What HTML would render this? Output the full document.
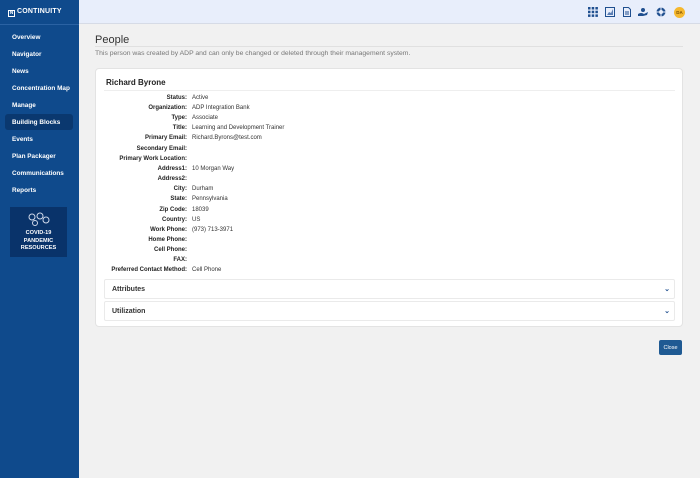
<!DOCTYPE html>
<html><head><style>
*{margin:0;padding:0;box-sizing:border-box}
body{width:700px;height:478px;overflow:hidden;background:#f1f1f1;font-family:"Liberation Sans",sans-serif;position:relative}
#sb{position:absolute;left:0;top:0;width:79px;height:478px;background:#0f4a8c}
#logo{position:absolute;left:8px;top:8px;color:#fff;font-size:7px;font-weight:bold;letter-spacing:.2px}
#logo span{display:inline-block;width:7px;height:7px;border:1px solid #fff;margin-right:2px;vertical-align:-1px;font-size:5px;line-height:5px;text-align:center}
.hr{position:absolute;left:0;top:24px;width:79px;height:1px;background:#2a62a3}
.nav{position:absolute;left:12px;color:#fff;font-size:6.4px;font-weight:bold}
#bb{position:absolute;left:5px;top:114px;width:68px;height:16px;background:#0a386f;border-radius:3px}
#covid{position:absolute;left:10px;top:207px;width:57px;height:50px;background:#09336a;color:#fff;font-size:5.6px;font-weight:bold;text-align:center;line-height:7.5px;padding-top:23px}
#hd{position:absolute;left:79px;top:0;width:621px;height:24px;background:#e8eefb;border-bottom:1px solid #d6dbe6}
h1{position:absolute;left:95px;top:34px;font-size:11px;font-weight:normal;color:#333}
.sep{position:absolute;left:95px;top:46px;width:588px;height:1px;background:#e0e0e0}
.note{position:absolute;left:95px;top:50px;font-size:6.8px;color:#777}
#card{position:absolute;left:95px;top:68px;width:588px;height:259px;background:#fff;border:1px solid #e3e3e3;border-radius:4px}
#name{position:absolute;left:106px;top:78px;font-size:8px;font-weight:bold;color:#222}
.sep2{position:absolute;left:104px;top:90px;width:571px;height:1px;background:#eee}
.r{position:absolute;font-size:6px;color:#333;white-space:nowrap}
.l{right:513px;font-weight:bold;color:#222}
.v{left:192px}
.acc{position:absolute;left:104px;width:571px;height:20px;background:#fff;border:1px solid #eaeaea;border-radius:2px;font-size:7px;font-weight:bold;color:#333;padding:6px 7px}
.acc i{position:absolute;right:4px;top:5px;font-style:normal;color:#1f4f8f;font-size:7px}
#close{position:absolute;left:659px;top:340px;width:23px;height:15px;background:#1f5a93;border-radius:2px;color:#fff;font-size:5.5px;display:flex;align-items:center;justify-content:center}
.ic{position:absolute;top:7px;width:10px;height:10px}
</style></head><body>
<div id="sb">
<div id="logo"><span>N</span>CONTINUITY</div>
<div class="hr"></div>
<div id="bb"></div>
<div class="nav" style="top:34px">Overview</div>
<div class="nav" style="top:51px">Navigator</div>
<div class="nav" style="top:68px">News</div>
<div class="nav" style="top:85px">Concentration Map</div>
<div class="nav" style="top:102px">Manage</div>
<div class="nav" style="top:119px">Building Blocks</div>
<div class="nav" style="top:136px">Events</div>
<div class="nav" style="top:153px">Plan Packager</div>
<div class="nav" style="top:170px">Communications</div>
<div class="nav" style="top:187px">Reports</div>
<div id="covid"><svg style="position:absolute;left:16px;top:4px" width="26" height="16" viewBox="0 0 26 16"><g fill="none" stroke="#cfd8ea" stroke-width="1"><circle cx="6" cy="6" r="3"/><circle cx="14" cy="5" r="3"/><circle cx="20" cy="9" r="3"/><circle cx="9" cy="12" r="2.5"/></g></svg>COVID-19<br>PANDEMIC<br>RESOURCES</div>
</div>
<div id="hd"></div>
<svg class="ic" style="left:588px" viewBox="0 0 10 10" fill="#1f4f8f"><rect x="0" y="0" width="2.5" height="2.5"/><rect x="3.7" y="0" width="2.5" height="2.5"/><rect x="7.4" y="0" width="2.5" height="2.5"/><rect x="0" y="3.7" width="2.5" height="2.5"/><rect x="3.7" y="3.7" width="2.5" height="2.5"/><rect x="7.4" y="3.7" width="2.5" height="2.5"/><rect x="0" y="7.4" width="2.5" height="2.5"/><rect x="3.7" y="7.4" width="2.5" height="2.5"/><rect x="7.4" y="7.4" width="2.5" height="2.5"/></svg>
<svg class="ic" style="left:605px" viewBox="0 0 10 10"><rect x=".5" y=".5" width="9" height="9" fill="none" stroke="#1f4f8f"/><path d="M2 8L4 5L6 6L8 2V8Z" fill="#5b7fb5"/></svg>
<svg class="ic" style="left:622px" viewBox="0 0 10 10"><path d="M1.5 .5H6.5L8.5 2.5V9.5H1.5Z" fill="none" stroke="#1f4f8f"/><path d="M3 5H7M3 7H7" stroke="#1f4f8f"/></svg>
<svg class="ic" style="left:638px" viewBox="0 0 10 10" fill="#1f4f8f"><circle cx="5" cy="3" r="2"/><path d="M0 7Q3 5 6 7L10 5L9 8L5 9L0 9Z"/></svg>
<svg class="ic" style="left:656px" viewBox="0 0 10 10"><circle cx="5" cy="5" r="4.5" fill="#1f4f8f"/><circle cx="5" cy="5" r="2" fill="#e8eefb"/><path d="M5 .5V9.5M.5 5H9.5" stroke="#e8eefb" stroke-width="1"/></svg>
<div style="position:absolute;left:674px;top:7px;width:11px;height:11px;border-radius:50%;background:#f5b82e;font-size:4.5px;font-weight:bold;color:#7a4d00;text-align:center;line-height:11px">DA</div>
<h1>People</h1>
<div class="sep"></div>
<div class="note">This person was created by ADP and can only be changed or deleted through their management system.</div>
<div id="card"></div>
<div id="name">Richard Byrone</div>
<div class="sep2"></div>
<div class="r l" style="top:95px">Status:</div><div class="r v" style="top:95px">Active</div>
<div class="r l" style="top:105px">Organization:</div><div class="r v" style="top:105px">ADP Integration Bank</div>
<div class="r l" style="top:115px">Type:</div><div class="r v" style="top:115px">Associate</div>
<div class="r l" style="top:125px">Title:</div><div class="r v" style="top:125px">Learning and Development Trainer</div>
<div class="r l" style="top:135px">Primary Email:</div><div class="r v" style="top:135px">Richard.Byrons@test.com</div>
<div class="r l" style="top:146px">Secondary Email:</div>
<div class="r l" style="top:156px">Primary Work Location:</div>
<div class="r l" style="top:166px">Address1:</div><div class="r v" style="top:166px">10 Morgan Way</div>
<div class="r l" style="top:176px">Address2:</div>
<div class="r l" style="top:186px">City:</div><div class="r v" style="top:186px">Durham</div>
<div class="r l" style="top:196px">State:</div><div class="r v" style="top:196px">Pennsylvania</div>
<div class="r l" style="top:207px">Zip Code:</div><div class="r v" style="top:207px">18039</div>
<div class="r l" style="top:217px">Country:</div><div class="r v" style="top:217px">US</div>
<div class="r l" style="top:227px">Work Phone:</div><div class="r v" style="top:227px">(973) 713-3971</div>
<div class="r l" style="top:237px">Home Phone:</div>
<div class="r l" style="top:247px">Cell Phone:</div>
<div class="r l" style="top:257px">FAX:</div>
<div class="r l" style="top:267px">Preferred Contact Method:</div><div class="r v" style="top:267px">Cell Phone</div>
<div class="acc" style="top:279px">Attributes<i>⌄</i></div>
<div class="acc" style="top:301px">Utilization<i>⌄</i></div>
<div id="close">Close</div>
</body></html>
